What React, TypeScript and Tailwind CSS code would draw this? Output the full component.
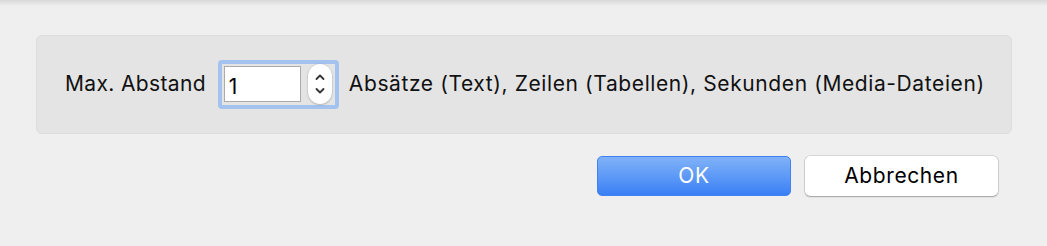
export default function App() {
  return (
    <div
      className="relative h-[246px] w-[1047px] bg-[#efefef] text-[21px] tracking-[0.6px] text-[#111]"
      style={{ fontFamily: 'Inter, "Liberation Sans", Arial, sans-serif' }}
    >
      <div className="absolute inset-x-0 top-0 h-[6px] bg-gradient-to-b from-[#d9d9d9] to-[#efefef]" />
      <div className="flex flex-col px-[36px] pt-[35px]">
        <div className="flex h-[99px] w-[976px] items-center rounded-[6px] border border-[#dddddd] bg-[#e4e4e4] pb-[1px] pl-[28px]">
          <span className="tracking-[0.35px]">Max. Abstand</span>
          <div className="ml-[12px] flex h-[49px] items-center gap-[7px] rounded-[4px] border-[4px] border-[#a4c2ef] pl-[2px] pr-[3px]">
            <input
              defaultValue="1"
              className="h-[36px] w-[77px] border border-[#ababab] bg-white px-[4px] pt-[4px] text-[21px] text-black outline-none"
            />
            <div className="flex h-[40px] w-[24px] flex-col items-center justify-center rounded-full bg-white shadow-[0_0.5px_2px_rgba(0,0,0,0.35)]">
              <svg width="12" height="30" viewBox="0 0 12 30" fill="none" stroke="#333" strokeWidth="1.8" strokeLinecap="round" strokeLinejoin="round">
                <path d="M2.5 10 L6 6.5 L9.5 10" />
                <path d="M2.5 20 L6 23.5 L9.5 20" />
              </svg>
            </div>
          </div>
          <span className="ml-[10px]">Absätze (Text), Zeilen (Tabellen), Sekunden (Media-Dateien)</span>
        </div>
        <div className="mt-[22px] flex justify-end gap-[14px] pr-[13px]">
          <button className="h-[40px] w-[194px] rounded-[5px] border border-[#3f82f0] bg-gradient-to-b from-[#80b2f7] to-[#3a7ff5] text-[21px] tracking-[0.6px] text-white">
            OK
          </button>
          <button className="h-[40px] w-[193px] rounded-[5px] bg-white text-[21px] tracking-[0.6px] text-black shadow-[0_0_0_0.5px_rgba(0,0,0,0.2),0_1px_1.5px_rgba(0,0,0,0.25)]">
            Abbrechen
          </button>
        </div>
      </div>
    </div>
  );
}
